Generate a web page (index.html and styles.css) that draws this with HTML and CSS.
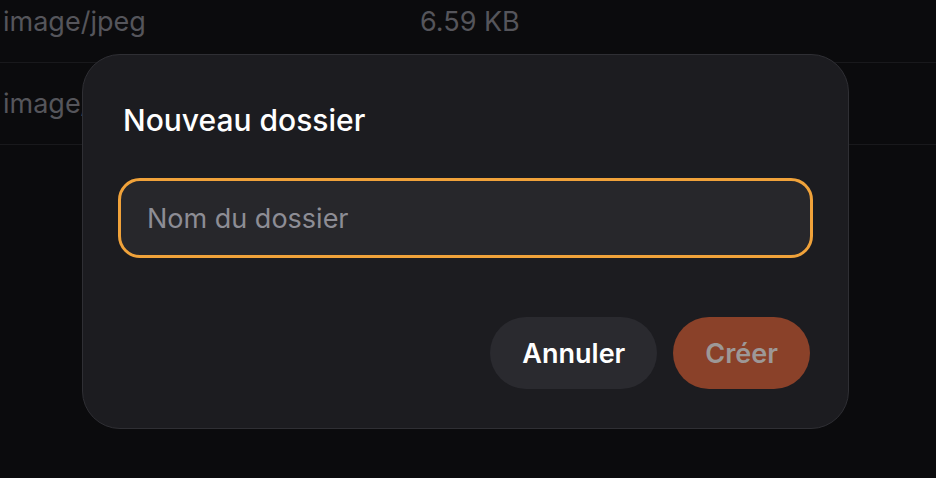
FILE: index.html
```html
<!DOCTYPE html>
<html lang="fr">
<head>
<meta charset="utf-8">
<title>Nouveau dossier</title>
<link rel="stylesheet" href="styles.css">
</head>
<body>
<div class="page">
  <div class="table">
    <div class="row">
      <span class="cell type">image/jpeg</span>
      <span class="cell size">6.59 KB</span>
    </div>
    <div class="row">
      <span class="cell type">image/jpeg</span>
      <span class="cell size">4.12 KB</span>
    </div>
  </div>

  <div class="dialog" role="dialog" aria-label="Nouveau dossier">
    <h2 class="title">Nouveau dossier</h2>
    <input class="field" type="text" placeholder="Nom du dossier">
    <div class="actions">
      <button class="btn btn-cancel">Annuler</button>
      <button class="btn btn-create" disabled>Créer</button>
    </div>
  </div>
</div>
</body>
</html>
```

FILE: styles.css
```css
html, body {
  margin: 0;
  padding: 0;
  background: #0b0b0d;
  font-family: Inter, "Noto Sans", "Liberation Sans", sans-serif;
}

.page {
  position: relative;
  width: 936px;
  height: 478px;
  overflow: hidden;
}

.table {
  margin-top: -19px;
}

.row {
  display: flex;
  align-items: center;
  height: 81px;
  border-bottom: 1px solid #19191c;
  font-size: 27px;
  color: #55555b;
}

.cell.type {
  width: 420px;
  padding-left: 3px;
  box-sizing: border-box;
}

.dialog {
  position: absolute;
  left: 82px;
  top: 54px;
  width: 767px;
  height: 375px;
  box-sizing: border-box;
  background: #1c1c20;
  border: 1px solid #2f2f34;
  border-radius: 38px;
  padding: 36px 35px 39px 35px;
  display: flex;
  flex-direction: column;
}

.title {
  margin: 11px 0 0 5px;
  font-size: 30px;
  font-weight: 500;
  color: #ffffff;
  line-height: 36px;
}

.field {
  margin-top: 40px;
  height: 80px;
  box-sizing: border-box;
  background: #27272b;
  border: 3px solid #f0a23a;
  border-radius: 22px;
  padding: 0 26px;
  font-family: inherit;
  font-size: 27px;
  color: #ffffff;
  outline: none;
}

.field::placeholder {
  color: #8d8d95;
}

.actions {
  margin-top: auto;
  display: flex;
  justify-content: flex-end;
  gap: 16px;
  padding-right: 3px;
}

.btn {
  height: 72px;
  border: none;
  border-radius: 36px;
  font-family: inherit;
  font-size: 27px;
  font-weight: 600;
  padding: 0 32px;
}

.btn-cancel {
  background: #2a2a2f;
  color: #ffffff;
}

.btn-create {
  background: #8a4129;
  color: #9d9897;
}
```
